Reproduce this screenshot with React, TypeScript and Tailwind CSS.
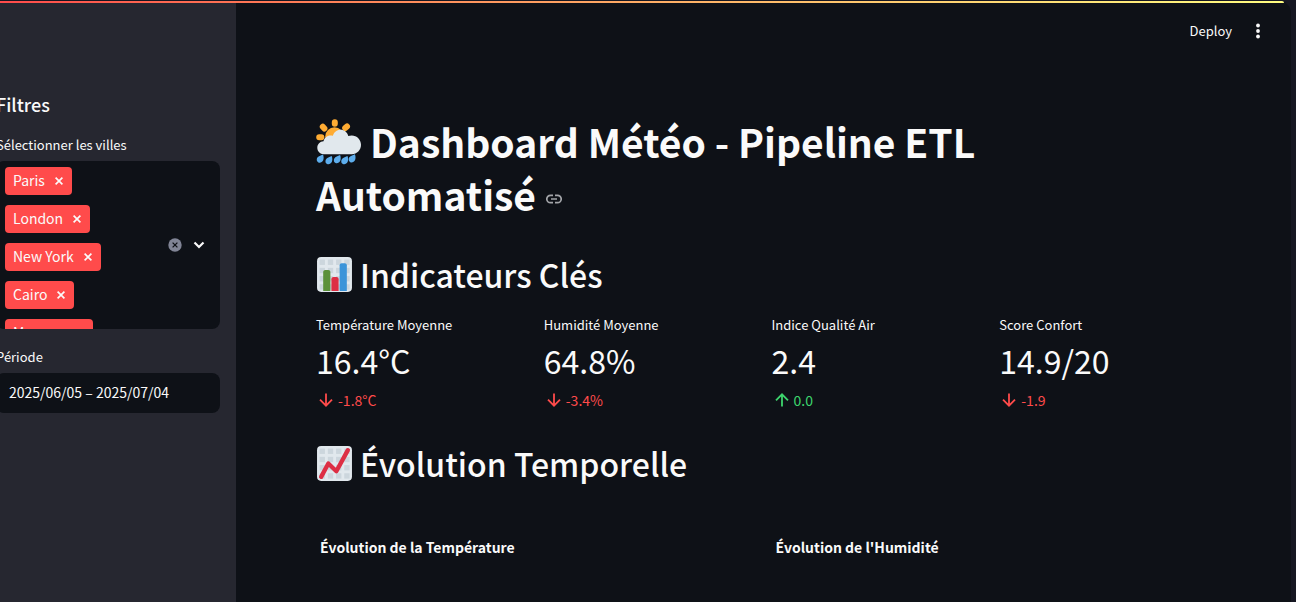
import React, { useState } from "react";

const cells = [3.5, 11.5, 19.5, 27.5];

function Grid() {
  return (
    <>
      <rect x="1" y="1" width="34" height="34" rx="4" fill="#E1E8ED" />
      {cells.map((y) => cells.map((x) => <rect key={`${x}-${y}`} x={x} y={y} width="5.2" height="5.2" fill="#CCD6DD" />))}
    </>
  );
}

function BarChartIcon() {
  return (
    <svg viewBox="0 0 36 36" className="size-[37px] shrink-0" aria-hidden="true">
      <Grid />
      <path fill="#5C913B" d="M14 34H7V15.500c0-1.104.896-2 2-2h3c1.104 0 2 .896 2 2z" />
      <path fill="#3B94D9" d="M30 34h-7V9c0-1.104.896-2 2-2h3c1.104 0 2 .896 2 2z" />
      <path fill="#DD2E44" d="M22 34h-7V22.500c0-1.104.896-2 2-2h3c1.104 0 2 .896 2 2z" />
    </svg>
  );
}

function TrendIcon() {
  return (
    <svg viewBox="0 0 36 36" className="size-[37px] shrink-0" aria-hidden="true">
      <Grid />
      <path fill="none" stroke="#DD2E44" strokeWidth="4.2" strokeLinecap="round" strokeLinejoin="round" d="M5 31l7-13 7.800 7.500L31 5" />
    </svg>
  );
}

const drops = ["translate(4.3 38.6)", "translate(13 40.2)", "translate(21.4 39.2)", "translate(28.8 40.2)", "translate(36.2 38.4)"];

function WeatherIcon() {
  return (
    <svg viewBox="0 0 46 46" className="size-[46px] shrink-0" aria-hidden="true">
      <g stroke="#FFAC33" strokeWidth="6" strokeLinecap="round">
        <path d="M18.8 3.2v1.6M6.8 7.8l1.6 1.8M31 7.4l-1.8 1.6M3.2 18.3h2.2" />
      </g>
      <circle cx="18.5" cy="17.5" r="9.3" fill="#FFAC33" />
      <path fill="#E1E8ED" d="M7.6 35.2C4 35.2 1.3 32.3 1.3 28.8s2.7-6.3 6.2-6.5C8.2 18.8 11 16.4 14.4 16.4c.9 0 1.7.1 2.5.4 1-3.5 4-6 7.6-6 3.8 0 7 2.6 7.8 6.2 1-.4 2.3-.6 3.4-.6 5.3 0 9.3 4.2 9.3 9.4s-4 9.4-9.2 9.4z" />
      {drops.map((t) => (
        <path key={t} transform={t} fill="#5DADEC" d="M2.7-3.1C3.300-1.500 3.700.600 2.900 2.600 2 4.700-.200 5.500-1.900 4.800-3.600 4-4 2-3.100.200-2 -1.500.300-1.700 2.700-3.100z" />
      ))}
    </svg>
  );
}

function Cross() {
  return (
    <svg viewBox="0 0 8 8" className="size-2" fill="none" stroke="currentColor" strokeWidth="1.7" aria-hidden="true">
      <path d="M.6.6l6.8 6.8M7.4.6L.6 7.4" />
    </svg>
  );
}

function Arrow({ up }: { up: boolean }) {
  return (
    <svg viewBox="0 0 20 20" className="size-5" fill="none" stroke="currentColor" strokeWidth="1.8" aria-hidden="true">
      {up ? <path d="M10 16.500V4.500M4 10.300l6-6 6 6" /> : <path d="M10 3.500v12M4 9.700l6 6 6-6" />}
    </svg>
  );
}

const metrics = [
  { label: "Température Moyenne", value: "16.4°C", delta: "-1.8°C", up: false },
  { label: "Humidité Moyenne", value: "64.8%", delta: "-3.4%", up: false },
  { label: "Indice Qualité Air", value: "2.4", delta: "0.0", up: true },
  { label: "Score Confort", value: "14.9/20", delta: "-1.9", up: false },
];

export default function App() {
  const [cities, setCities] = useState(["Paris", "London", "New York", "Cairo", "Moscow"]);
  const [period, setPeriod] = useState("2025/06/05 – 2025/07/04");

  return (
    <div className="relative min-h-screen overflow-hidden bg-[#161722] pr-[5px] pt-px font-['Noto_Sans_CJK_SC',sans-serif] text-[#fafafa]">
      <div className="flex min-h-screen overflow-hidden rounded-tr-xl bg-[#0e1117]">
        <aside className="-ml-5 w-64 shrink-0 bg-[#262730] px-4 pt-[91px]">
          <h2 className="text-lg leading-6 font-medium">Filtres</h2>
          <p id="cities-label" className="mt-[21px] text-[13px] leading-4">Sélectionner les villes</p>
          <div role="group" aria-labelledby="cities-label" className="mt-2 flex h-[168px] items-center rounded-lg bg-[#0e1117] pr-3">
            <div className="flex h-full flex-1 flex-col items-start gap-2.5 overflow-hidden pt-1.5 pl-[9px]">
              {cities.map((city) => (
                <span key={city} className="flex h-7 shrink-0 items-center gap-2.5 rounded-sm bg-[#ff4b4b] pr-[9px] pl-2 text-sm leading-[26px]">
                  <span className="self-start">{city}</span>
                  <button type="button" aria-label={`Retirer ${city}`} onClick={() => setCities(cities.filter((c) => c !== city))}>
                    <Cross />
                  </button>
                </span>
              ))}
            </div>
            <button type="button" aria-label="Tout effacer" onClick={() => setCities([])}>
              <svg viewBox="0 0 14 14" className="size-3.5" aria-hidden="true">
                <circle cx="7" cy="7" r="6.7" fill="#808495" />
                <path d="M4.600 4.600l4.800 4.800M9.400 4.600L4.600 9.400" stroke="#0e1117" strokeWidth="1.3" />
              </svg>
            </button>
            <button type="button" aria-label="Ouvrir la liste" className="ml-2">
              <svg viewBox="0 0 18 18" className="size-[18px]" fill="none" stroke="currentColor" strokeWidth="2.2" aria-hidden="true">
                <path d="M4.500 6.500L9 11l4.500-4.500" />
              </svg>
            </button>
          </div>
          <label htmlFor="period" className="mt-5 block text-[13px] leading-4">Période</label>
          <input
            id="period"
            value={period}
            onChange={(e) => setPeriod(e.target.value)}
            className="mt-2 h-10 w-full rounded-lg bg-[#0e1117] px-[13px] pb-0.5 text-sm outline-none"
          />
        </aside>

        <div className="min-w-0 flex-1">
          <header className="flex h-15 items-center justify-end gap-4 pr-[23px]">
            <button type="button" className="text-[13px]">Deploy</button>
            <button type="button" aria-label="Menu" className="flex w-5 justify-center">
              <svg viewBox="0 0 4 16" className="h-4 w-1" fill="currentColor" aria-hidden="true">
                <circle cx="2" cy="2.5" r="1.9" />
                <circle cx="2" cy="8" r="1.9" />
                <circle cx="2" cy="13.5" r="1.9" />
              </svg>
            </button>
          </header>
          <main className="px-20">
            <h1 className="mt-[54px] text-[39px] leading-[53px] font-bold">
              <span className="flex items-center gap-2">
                <WeatherIcon />
                Dashboard Météo - Pipeline ETL
              </span>
              <span className="flex items-center gap-2.5">
                Automatisé
                <a href="#dashboard" aria-label="Lien vers le titre" className="pt-2 text-[#a3a5a9]">
                  <svg viewBox="0 0 16 10" className="h-2.5 w-4" fill="none" stroke="currentColor" strokeWidth="1.7" aria-hidden="true">
                    <path d="M7 1.300H4.500a3.700 3.700 0 0 0 0 7.400H7M9 1.300h2.500a3.700 3.700 0 0 1 0 7.400H9M5 5h6" />
                  </svg>
                </a>
              </span>
            </h1>
            <h2 className="mt-[31px] flex items-center gap-[7px] text-[32px] leading-[44px] font-medium">
              <BarChartIcon />
              Indicateurs Clés
            </h2>
            <div className="mt-[19px] grid grid-cols-4 gap-4">
              {metrics.map((m) => (
                <div key={m.label}>
                  <div className="text-[13px] leading-5">{m.label}</div>
                  <div className="text-[32px] leading-[50px]">{m.value}</div>
                  <div className={m.up ? "mt-[3px] flex items-center gap-0.5 text-sm leading-6 text-[#3dd56d]" : "mt-[3px] flex items-center gap-0.5 text-sm leading-6 text-[#ff4b4b]"}>
                    <Arrow up={m.up} />
                    {m.delta}
                  </div>
                </div>
              ))}
            </div>
            <h2 className="mt-[29px] flex items-center gap-[7px] text-[32px] leading-[44px] font-medium">
              <TrendIcon />
              Évolution Temporelle
            </h2>
            <div className="mt-[50px] grid grid-cols-2 gap-4">
              <h3 className="pl-1 text-sm leading-6 font-bold">Évolution de la Température</h3>
              <h3 className="pl-1 text-sm leading-6 font-bold">Évolution de l'Humidité</h3>
            </div>
          </main>
        </div>
      </div>
      <div className="absolute inset-x-0 top-px mr-3 h-0.5 rounded-tr-full bg-linear-to-r from-[#ff4b4b] to-[#fffd80]" />
    </div>
  );
}
